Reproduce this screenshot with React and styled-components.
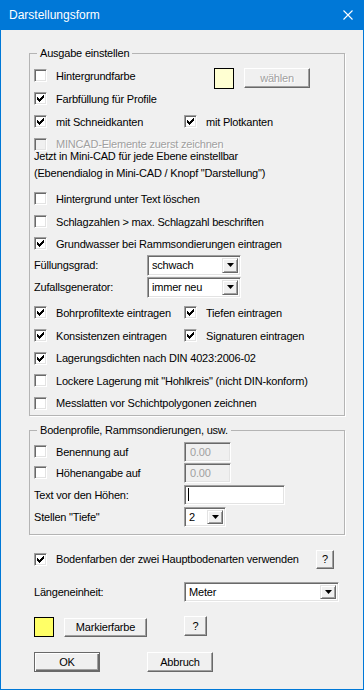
import styled, { createGlobalStyle } from "styled-components";

const GlobalStyle = createGlobalStyle`
  html, body {
    margin: 0;
    padding: 0;
    background: #f0f0f0;
  }
  body {
    font-family: "Liberation Sans", Arial, sans-serif;
    font-size: 11px;
    color: #000;
  }
`;

const Window = styled.div`
  width: 364px;
  height: 690px;
  box-sizing: border-box;
  border: 1px solid #0078d7;
  border-top: none;
  background: #f0f0f0;
  display: flex;
  flex-direction: column;
`;

const TitleBar = styled.div`
  height: 30px;
  flex-shrink: 0;
  background: #0078d7;
  color: #fff;
  font-size: 12px;
  display: flex;
  align-items: center;
  justify-content: space-between;
  padding: 0 10px 0 8px;
`;

const Body = styled.div`
  padding: 16px 0 0 28px;
  display: flex;
  flex-direction: column;
  letter-spacing: -0.2px;
`;

const Group = styled.fieldset`
  margin: ${(p) => p.$mt || 0}px 0 0 0;
  width: 316px;
  box-sizing: border-box;
  border: 1px solid #b4b4b4;
  box-shadow: 1px 1px 0 #fff;
  padding: 0 0 ${(p) => p.$pb || 0}px 4px;
  min-inline-size: 0;
`;

const Legend = styled.legend`
  margin-left: 3px;
  padding: 0 3px;
  line-height: 14px;
  font-size: 11px;
`;

const GroupBody = styled.div`
  padding-top: 4px;
  display: flex;
  flex-direction: column;
`;

const Row = styled.div`
  display: flex;
  align-items: center;
  height: ${(p) => p.$h || 23}px;
  margin-top: ${(p) => p.$mt || 0}px;
  margin-left: ${(p) => p.$ml || 0}px;
  flex-shrink: 0;
`;

const Item = styled.div`
  display: flex;
  align-items: center;
  width: ${(p) => (p.$w ? `${p.$w}px` : "auto")};
  flex-shrink: 0;
  color: ${(p) => (p.$disabled ? "#a0a0a0" : "#000")};
  text-shadow: ${(p) => (p.$disabled ? "1px 1px 0 #fff" : "none")};
  white-space: nowrap;
`;

const Box = styled.span`
  width: 13px;
  height: 13px;
  box-sizing: border-box;
  border: 1px solid;
  border-color: #a0a0a0 #fff #fff #a0a0a0;
  box-shadow: inset 1px 1px 0 #696969, inset -1px -1px 0 #e3e3e3;
  background: ${(p) => (p.$disabled ? "#f0f0f0" : "#fff")};
  margin-right: 9px;
  display: flex;
  align-items: center;
  justify-content: center;
  flex-shrink: 0;
  text-shadow: none;
`;

const Note = styled.div`
  margin-top: -7px;
  line-height: 17px;
  white-space: nowrap;
`;

const Sunken = styled.div`
  width: ${(p) => p.$w}px;
  height: ${(p) => p.$h || 20}px;
  box-sizing: border-box;
  border: 1px solid;
  border-color: #a0a0a0 #fff #fff #a0a0a0;
  box-shadow: inset 1px 1px 0 #696969, inset -1px -1px 0 #e3e3e3;
  background: ${(p) => (p.$disabled ? "#f0f0f0" : "#fff")};
  color: ${(p) => (p.$disabled ? "#a0a0a0" : "#000")};
  display: flex;
  align-items: center;
  padding: 0 2px 0 ${(p) => p.$pl || 3}px;
  flex-shrink: 0;
`;

const ComboText = styled.span`
  flex: 1;
  white-space: nowrap;
  overflow: hidden;
`;

const DropBtn = styled.span`
  width: 16px;
  height: calc(100% - 4px);
  box-sizing: border-box;
  border: 1px solid;
  border-color: #e3e3e3 #696969 #696969 #e3e3e3;
  box-shadow: inset 1px 1px 0 #fff, inset -1px -1px 0 #a0a0a0;
  background: #f0f0f0;
  display: flex;
  align-items: center;
  justify-content: center;
`;

const Caret = styled.span`
  width: 1px;
  height: 13px;
  background: #000;
`;

const Button = styled.div`
  width: ${(p) => p.$w}px;
  height: ${(p) => p.$h || 20}px;
  margin-left: ${(p) => p.$ml || 0}px;
  margin-top: ${(p) => p.$mt || 0}px;
  box-sizing: border-box;
  border: 1px solid;
  border-color: ${(p) =>
    p.$default ? "#696969" : "#fff #696969 #696969 #fff"};
  box-shadow: ${(p) =>
    p.$default
      ? "inset 1px 1px 0 #fff, inset -1px -1px 0 #696969, inset -2px -2px 0 #a0a0a0"
      : "inset -1px -1px 0 #a0a0a0"};
  background: #f0f0f0;
  color: ${(p) => (p.$disabled ? "#a0a0a0" : "#000")};
  text-shadow: ${(p) => (p.$disabled ? "1px 1px 0 #fff" : "none")};
  display: flex;
  align-items: center;
  justify-content: center;
  flex-shrink: 0;
  font-size: ${(p) => p.$fs || 11}px;
`;

const Swatch = styled.div`
  width: 20px;
  height: ${(p) => p.$h || 20}px;
  margin-top: ${(p) => p.$mt || 0}px;
  margin-right: 10px;
  box-sizing: border-box;
  border: 1px solid #000;
  background: ${(p) => p.$color};
  flex-shrink: 0;
`;

const CheckMark = () => (
  <svg width="7" height="7" viewBox="0 0 7 7">
    <path d="M0 2h1v1h1v1h1v-1h1v-1h1v-1h1v-1h1v3h-1v1h-1v1h-1v1h-1v1h-1v-1h-1v-1h-1z" fill="#000" />
  </svg>
);

const Arrow = () => (
  <svg width="7" height="4" viewBox="0 0 7 4">
    <path d="M0 0h7l-3.5 4z" fill="#000" />
  </svg>
);

const CloseIcon = () => (
  <svg width="10" height="10" viewBox="0 0 10 10">
    <path d="M0.5 0.5l9 9M9.5 0.5l-9 9" stroke="#fff" strokeWidth="1.1" />
  </svg>
);

const Check = ({ checked, disabled, w, children }) => (
  <Item $w={w} $disabled={disabled}>
    <Box $disabled={disabled}>{checked && !disabled && <CheckMark />}</Box>
    {children}
  </Item>
);

const Combo = ({ w, h, value }) => (
  <Sunken $w={w} $h={h} $pl={4}>
    <ComboText>{value}</ComboText>
    <DropBtn>
      <Arrow />
    </DropBtn>
  </Sunken>
);

const App = () => {
  return (
    <>
      <GlobalStyle />
      <Window>
        <TitleBar>
          <span>Darstellungsform</span>
          <CloseIcon />
        </TitleBar>
        <Body>
          <Group $pb={1}>
            <Legend>Ausgabe einstellen</Legend>
            <GroupBody>
              <Row>
                <Check w={180}>Hintergrundfarbe</Check>
                <Swatch $color="#ffffd2" $h={21} $mt={6} />
                <Button $w={66} $mt={4} $disabled>wählen</Button>
              </Row>
              <Row>
                <Check checked>Farbfüllung für Profile</Check>
              </Row>
              <Row>
                <Check checked w={150}>mit Schneidkanten</Check>
                <Check checked>mit Plotkanten</Check>
              </Row>
              <Row $h={22}>
                <Check disabled>MINCAD-Elemente zuerst zeichnen</Check>
              </Row>
              <Note>
                Jetzt in Mini-CAD für jede Ebene einstellbar
                <br />
                (Ebenendialog in Mini-CAD / Knopf "Darstellung")
              </Note>
              <Row $mt={5}>
                <Check>Hintergrund unter Text löschen</Check>
              </Row>
              <Row>
                <Check>Schlagzahlen &gt; max. Schlagzahl beschriften</Check>
              </Row>
              <Row $h={21}>
                <Check checked>Grundwasser bei Rammsondierungen eintragen</Check>
              </Row>
              <Row $h={22}>
                <Item $w={113}>Füllungsgrad:</Item>
                <Combo w={94} h={21} value="schwach" />
              </Row>
              <Row $h={22}>
                <Item $w={113}>Zufallsgenerator:</Item>
                <Combo w={94} h={21} value="immer neu" />
              </Row>
              <Row $mt={3}>
                <Check checked w={150}>Bohrprofiltexte eintragen</Check>
                <Check checked>Tiefen eintragen</Check>
              </Row>
              <Row>
                <Check checked w={150}>Konsistenzen eintragen</Check>
                <Check checked>Signaturen eintragen</Check>
              </Row>
              <Row $h={22}>
                <Check checked>Lagerungsdichten nach DIN 4023:2006-02</Check>
              </Row>
              <Row>
                <Check>Lockere Lagerung mit "Hohlkreis" (nicht DIN-konform)</Check>
              </Row>
              <Row $h={22}>
                <Check>Messlatten vor Schichtpolygonen zeichnen</Check>
              </Row>
            </GroupBody>
          </Group>

          <Group $mt={7} $pb={7}>
            <Legend>Bodenprofile, Rammsondierungen, usw.</Legend>
            <GroupBody>
              <Row $h={21}>
                <Check w={150}>Benennung auf</Check>
                <Sunken $w={47} $pl={5} $disabled>0.00</Sunken>
              </Row>
              <Row $h={21}>
                <Check w={150}>Höhenangabe auf</Check>
                <Sunken $w={47} $pl={5} $disabled>0.00</Sunken>
              </Row>
              <Row>
                <Item $w={150}>Text vor den Höhen:</Item>
                <Sunken $w={101} $pl={3}>
                  <Caret />
                </Sunken>
              </Row>
              <Row $h={21}>
                <Item $w={150}>Stellen "Tiefe"</Item>
                <Combo w={42} h={20} value="2" />
              </Row>
            </GroupBody>
          </Group>

          <Row $h={22} $mt={13} $ml={5}>
            <Check checked w={282}>Bodenfarben der zwei Hauptbodenarten verwenden</Check>
            <Button $w={18} $h={19}>?</Button>
          </Row>
          <Row $h={20} $mt={12} $ml={5}>
            <Item $w={150}>Längeneinheit:</Item>
            <Combo w={155} h={20} value="Meter" />
          </Row>
          <Row $h={22} $mt={14} $ml={5}>
            <Swatch $color="#ffff66" />
            <Button $w={83} $h={19}>Markierfarbe</Button>
            <Button $w={23} $ml={37} $mt={-3}>?</Button>
          </Row>
          <Row $h={20} $mt={14} $ml={5}>
            <Button $w={66} $default>OK</Button>
            <Button $w={66} $ml={47}>Abbruch</Button>
          </Row>
        </Body>
      </Window>
    </>
  );
};

export default App;
